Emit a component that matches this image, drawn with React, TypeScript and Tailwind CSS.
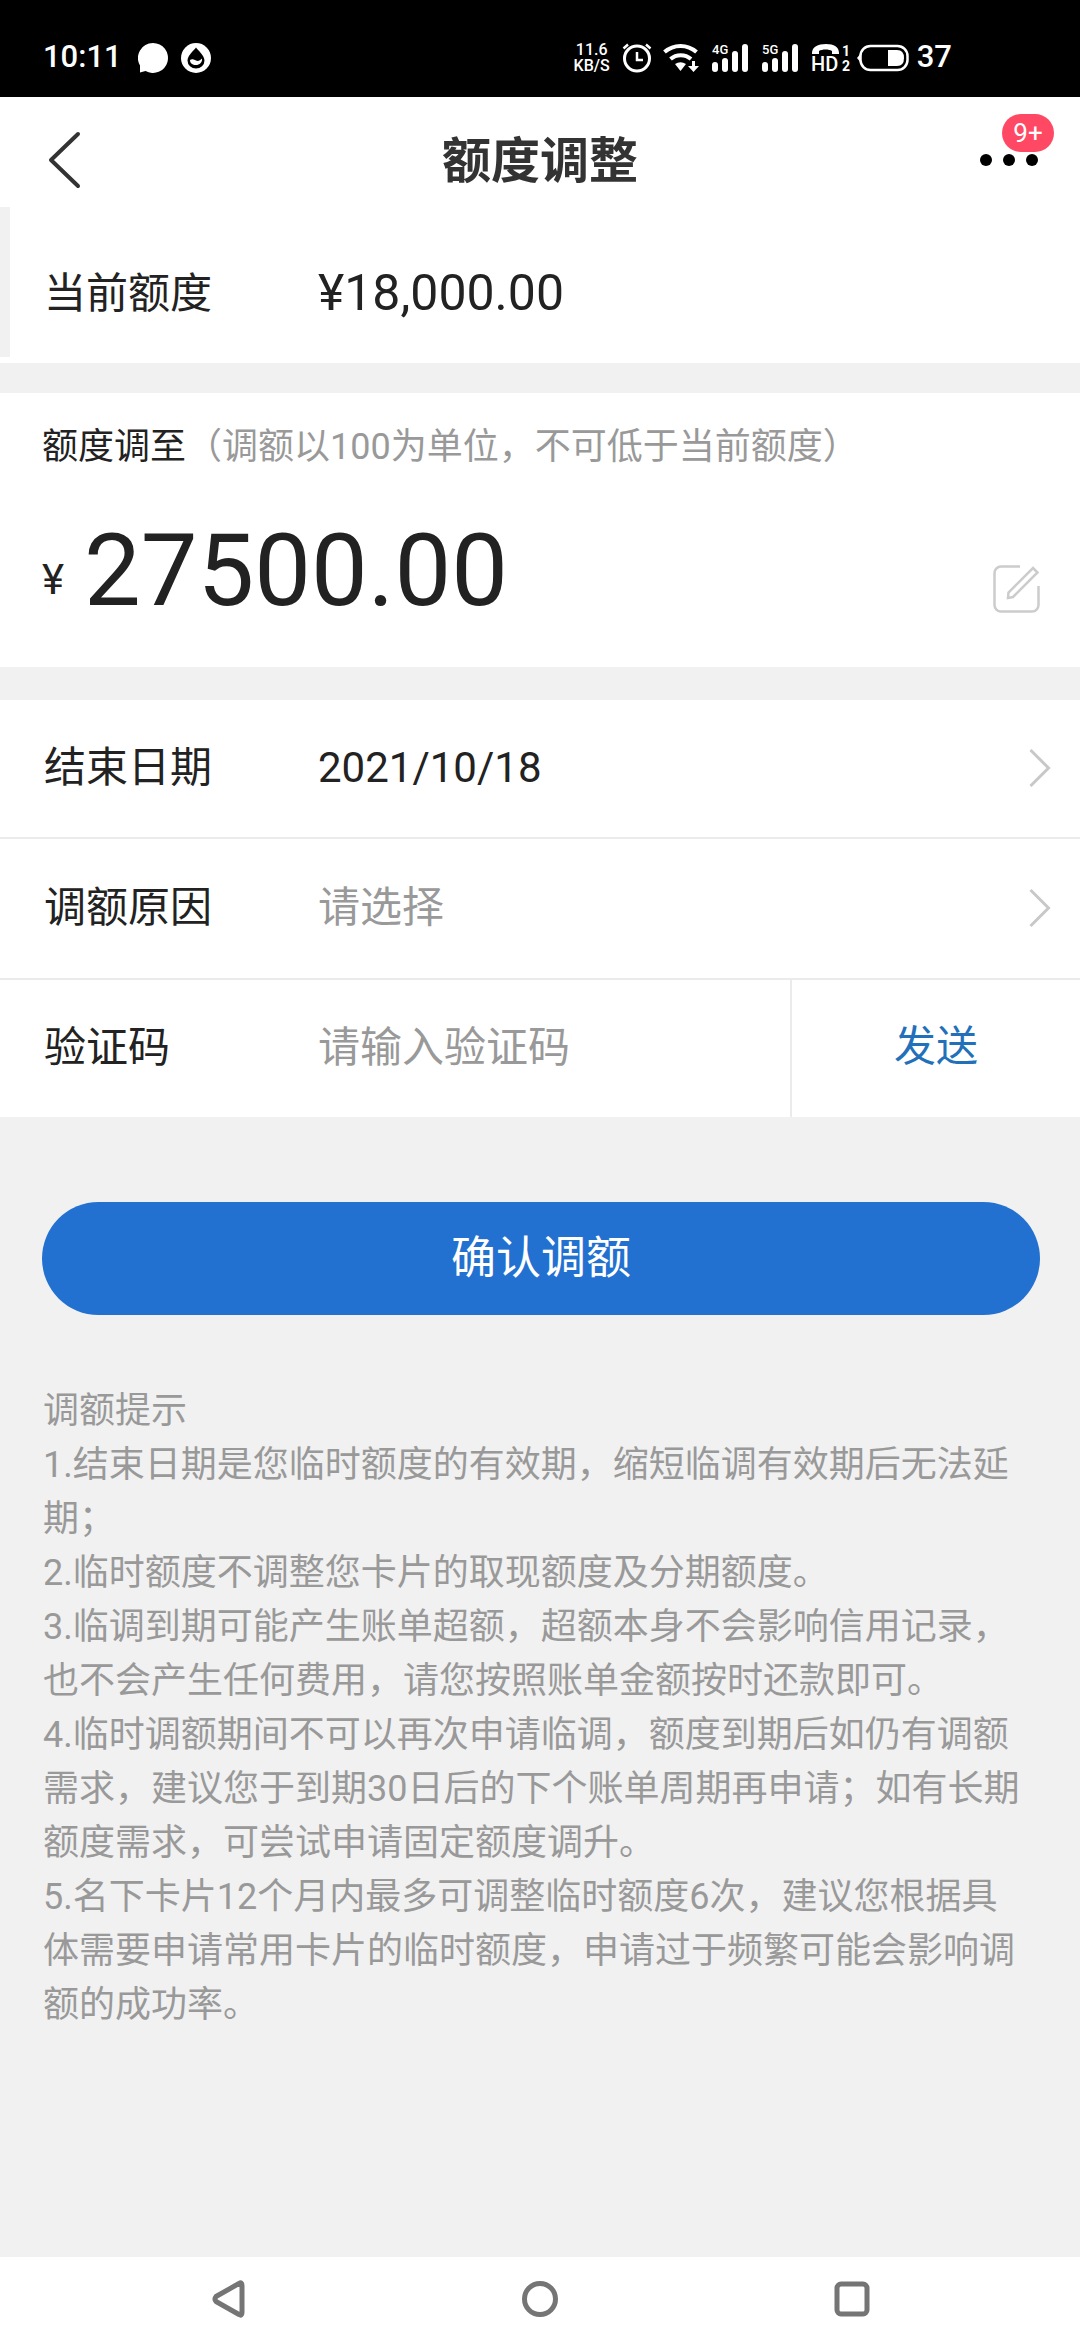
import React, { useState } from 'react';

const tips = [
  '1.结束日期是您临时额度的有效期，缩短临调有效期后无法延期；',
  '2.临时额度不调整您卡片的取现额度及分期额度。',
  '3.临调到期可能产生账单超额，超额本身不会影响信用记录，也不会产生任何费用，请您按照账单金额按时还款即可。',
  '4.临时调额期间不可以再次申请临调，额度到期后如仍有调额需求，建议您于到期30日后的下个账单周期再申请；如有长期额度需求，可尝试申请固定额度调升。',
  '5.名下卡片12个月内最多可调整临时额度6次，建议您根据具体需要申请常用卡片的临时额度，申请过于频繁可能会影响调额的成功率。',
];

// Signal strength with the network type above the short bars
function Signal({ label }: { label: string }) {
  return (
    <svg className="overflow-visible" width="38" height="30" viewBox="0 0 38 30" fill="white">
      <text x="0" y="11" fontSize="13" fontWeight="500">{label}</text>
      <rect x="0" y="19" width="6" height="10" rx="3" />
      <rect x="10" y="15" width="6" height="14" rx="3" />
      <rect x="20" y="8" width="6" height="21" rx="3" />
      <rect x="30" y="1" width="6" height="28" rx="3" />
    </svg>
  );
}

function StatusBar() {
  return (
    <div className="flex h-[97px] items-center justify-between bg-black pt-[18px] pr-[128px] pl-[43px] text-[31px] font-medium text-white">
      <div className="flex items-center">
        <span>10:11</span>
        <svg className="ml-4" width="30" height="30" viewBox="0 0 30 30" fill="white">
          <path d="M15 0a15 15 0 1 1-7.500 28L2 29.500V22.500A15 15 0 0 1 15 0z" />
        </svg>
        <svg className="ml-[13px]" width="30" height="30" viewBox="0 0 30 30">
          <circle cx="15" cy="15" r="15" fill="white" />
          <path d="M15 4.500c2 3 8.500 8 8.500 13a8.500 8 0 0 1-17 0c0-5 6.500-10 8.500-13z" fill="black" />
          <path d="M9 17c2-1.500 4-.5 6 .5s4 0 6-2c.5 4-2.500 6.500-6 6.500s-6-1.500-6-5z" fill="white" />
        </svg>
      </div>

      <div className="flex items-center">
        <div className="text-center text-[16px] leading-4">
          <div>11.6</div>
          <div>KB/S</div>
        </div>
        <svg className="ml-3" width="30" height="30" viewBox="0 0 30 30" fill="none" stroke="white" strokeWidth="3">
          <circle cx="15" cy="15.500" r="12.500" />
          <path d="M15 9v8h6" strokeWidth="2.500" />
          <path d="M1.500 5.500L6 1.500M24 1.500l4.500 4" strokeWidth="2.500" />
        </svg>
        <svg className="ml-[11px]" width="37" height="30" viewBox="0 0 37 30" fill="none" stroke="white" strokeWidth="4">
          <path d="M1.500 9a24 24 0 0 1 32 0" />
          <path d="M7.500 16a15.500 15.500 0 0 1 20.500 0" />
          <path d="M12 21q5.500-3.500 11 0l-5.500 7z" fill="white" stroke="none" />
          <path d="M29 18v5h-4l5.500 6 5.500-6h-4v-5z" fill="white" stroke="none" />
        </svg>
        <div className="ml-3">
          <Signal label="4G" />
        </div>
        <div className="ml-3">
          <Signal label="5G" />
        </div>
        <svg className="ml-3 overflow-visible" width="38" height="30" viewBox="0 0 38 30" fill="white">
          <path d="M0 10C0 4 6 1 14 1s13 3 13 9v1h-7V8c-3-2-10-2-13 0v3H0z" />
          <text x="-1" y="28" fontSize="20" fontWeight="500">HD</text>
          <text x="30" y="13" fontSize="14" fontWeight="700">1</text>
          <text x="30" y="28" fontSize="14" fontWeight="700">2</text>
        </svg>
        <svg className="ml-[7px]" width="52" height="28" viewBox="0 0 52 28">
          <path d="M4 9L0 14l4 5z" fill="white" />
          <rect x="3.500" y="2" width="47" height="24" rx="10" fill="none" stroke="white" strokeWidth="2.500" />
          <path d="M31 6h9q7 0 7 8t-7 8h-9z" fill="white" />
        </svg>
        <span className="ml-2">37</span>
      </div>
    </div>
  );
}

function ArrowRight() {
  return (
    <svg className="shrink-0" width="22" height="40" viewBox="0 0 22 40" fill="none" stroke="#c8c8c8" strokeWidth="3">
      <path d="M1.500 2L19.500 20 1.500 38" />
    </svg>
  );
}

export default function App() {
  const [amount, setAmount] = useState('27500.00');
  const [code, setCode] = useState('');

  return (
    <div className="flex min-h-screen flex-col bg-[#f1f1f1] font-[Roboto,'Noto_Sans_CJK_SC',sans-serif] text-[42px] text-[#222]">
      <StatusBar />

      <header className="flex h-[126px] items-center justify-between bg-white px-[42px]">
        <button type="button" aria-label="返回" className="flex w-[70px]">
          <svg width="46" height="60" viewBox="0 0 46 60" fill="none" stroke="#333" strokeWidth="4" strokeLinecap="round" strokeLinejoin="round">
            <path d="M36 4L9 30l27 26" />
          </svg>
        </button>
        <h1 className="pt-1 text-[49px] font-bold text-[#333]">额度调整</h1>
        <button type="button" aria-label="更多" className="relative flex w-[70px] gap-[11px] pl-3">
          <span className="size-3 rounded-full bg-black"></span>
          <span className="size-3 rounded-full bg-black"></span>
          <span className="size-3 rounded-full bg-black"></span>
          <span className="absolute -top-10 -right-4 flex h-[38px] w-[52px] items-center justify-center rounded-full bg-[#ff4864] text-[26px] text-white">
            9+
          </span>
        </button>
      </header>

      <main className="flex-1">
        <section className="relative flex h-[140px] items-center bg-white px-11">
          <div className="absolute -top-4 left-0 h-[150px] w-[10px] bg-[#f1f1f1]"></div>
          <span className="w-[274px]">当前额度</span>
          <span className="text-[50px]">¥18,000.00</span>
        </section>

        <section className="mt-[30px] bg-white pt-[27px] pr-10 pb-[36px] pl-[42px]">
          <label htmlFor="amount" className="block text-[36px] leading-[54px]">
            额度调至<span className="text-[#999]">（调额以100为单位，不可低于当前额度）</span>
          </label>
          <div className="mt-[37px] flex h-[120px] items-center">
            <span className="w-[42px] pt-4">¥</span>
            <input
              id="amount"
              type="text"
              inputMode="decimal"
              value={amount}
              onChange={(e) => setAmount(e.target.value)}
              className="h-[120px] min-w-0 flex-1 bg-transparent text-[101px] outline-none"
            />
            <button type="button" aria-label="编辑" className="pt-9">
              <svg width="47" height="48" viewBox="0 0 47 48" fill="none" stroke="#ccc" strokeWidth="2.500">
                <path d="M27 1.500H8A6.500 6.500 0 0 0 1.500 8v32A6.500 6.500 0 0 0 8 46.500h31a6.500 6.500 0 0 0 6.500-6.500V21" />
                <path d="M40 3l4.500 4.500L20 32l-5 1 .5-5.500z" />
              </svg>
            </button>
          </div>
        </section>

        <section className="mt-[33px] bg-white">
          <button type="button" className="flex h-[137px] w-full items-center pr-[29px] pb-[2px] pl-11 text-left">
            <span className="w-[274px]">结束日期</span>
            <span className="flex-1">2021/10/18</span>
            <ArrowRight />
          </button>
          <div className="flex h-[141px] items-center border-t-2 border-[#ebebeb] pr-[29px] pb-[2px] pl-11">
            <label htmlFor="reason" className="w-[274px]">调额原因</label>
            <select id="reason" defaultValue="" className="flex-1 appearance-none bg-transparent text-[#999] outline-none">
              <option value="">请选择</option>
            </select>
            <ArrowRight />
          </div>
          <div className="flex h-[139px] items-stretch border-t-2 border-[#ebebeb] pl-11">
            <label htmlFor="code" className="flex w-[274px] items-center pb-[2px]">验证码</label>
            <input
              id="code"
              type="text"
              placeholder="请输入验证码"
              value={code}
              onChange={(e) => setCode(e.target.value)}
              className="min-w-0 flex-1 bg-transparent pb-[2px] outline-none placeholder:text-[#999]"
            />
            <button type="button" className="w-[28%] border-l-2 border-[#ebebeb] pb-1 text-[#2270ba]">
              发送
            </button>
          </div>
        </section>

        <div className="pt-[85px] pr-10 pl-[42px]">
          <button type="button" className="h-[113px] w-full rounded-full bg-[#2270d0] text-[45px] text-white">
            确认调额
          </button>
        </div>

        <section className="mt-[69px] pr-[54px] pl-[43px] text-[36px] leading-[54px] text-[#999]">
          <h2>调额提示</h2>
          {tips.map((tip) => (
            <p key={tip}>{tip}</p>
          ))}
        </section>
      </main>

      <nav className="flex h-[83px] items-center justify-around bg-white px-[72px]">
        <button type="button" aria-label="后退">
          <svg width="38" height="40" viewBox="0 0 38 40" fill="none" stroke="#757575" strokeWidth="5" strokeLinejoin="round">
            <path d="M30 4.500q3-2 3 2v27q0 4-3 2L7 22.500q-2-2.500 0-5z" />
          </svg>
        </button>
        <button type="button" aria-label="主屏幕">
          <svg width="38" height="40" viewBox="0 0 38 40" fill="none" stroke="#757575" strokeWidth="5">
            <circle cx="19" cy="20" r="15.500" />
          </svg>
        </button>
        <button type="button" aria-label="最近任务">
          <svg width="38" height="40" viewBox="0 0 38 40" fill="none" stroke="#757575" strokeWidth="5">
            <rect x="4" y="5" width="30" height="30" rx="4" />
          </svg>
        </button>
      </nav>
    </div>
  );
}
